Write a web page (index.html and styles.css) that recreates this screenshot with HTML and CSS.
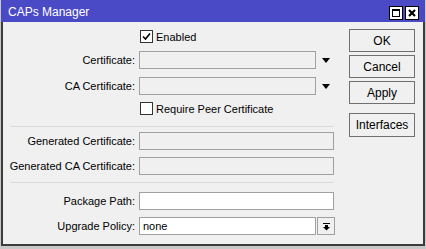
FILE: index.html
```html
<!DOCTYPE html>
<html lang="en">
<head>
    <meta charset="UTF-8">
    <meta name="viewport" content="width=device-width, initial-scale=1.0">
    <title>CAPs Manager</title>
    <link rel="stylesheet" href="styles.css">
</head>
<body>

    <div class="window">
        <!-- Title Bar -->
        <div class="titlebar">
            <span class="title">CAPs Manager</span>
            <div class="title-buttons">
                <span class="tbtn">
                    <svg width="10" height="10" viewBox="0 0 10 10"><rect x="1.5" y="1.5" width="7" height="7" fill="none" stroke="#000" stroke-width="1"/><rect x="1" y="1" width="8" height="2" fill="#000"/></svg>
                </span>
                <span class="tbtn">
                    <svg width="10" height="10" viewBox="0 0 10 10"><path d="M2 2 L8 8 M8 2 L2 8" stroke="#000" stroke-width="2.2"/></svg>
                </span>
            </div>
        </div>

        <div class="content">
            <!-- Form -->
            <div class="form">
                <div class="row check-row first">
                    <span class="label"></span>
                    <span class="checkbox">
                        <svg width="11" height="11" viewBox="0 0 11 11"><path d="M2 5.5 L4.5 8 L9 2.5" fill="none" stroke="#000" stroke-width="1.6"/></svg>
                    </span>
                    <span class="check-text">Enabled</span>
                </div>
                <div class="row field-row gap8">
                    <span class="label">Certificate:</span>
                    <span class="field disabled short"></span>
                    <span class="arrow"></span>
                </div>
                <div class="row field-row gap8">
                    <span class="label">CA Certificate:</span>
                    <span class="field disabled short"></span>
                    <span class="arrow"></span>
                </div>
                <div class="row check-row gap7">
                    <span class="label"></span>
                    <span class="checkbox"></span>
                    <span class="check-text">Require Peer Certificate</span>
                </div>

                <div class="separator sep1"></div>

                <div class="row field-row gap5">
                    <span class="label">Generated Certificate:</span>
                    <span class="field disabled wide"></span>
                </div>
                <div class="row field-row">
                    <span class="label">Generated CA Certificate:</span>
                    <span class="field disabled wide"></span>
                </div>

                <div class="separator sep2"></div>

                <div class="row field-row gap9">
                    <span class="label">Package Path:</span>
                    <span class="field wide"></span>
                </div>
                <div class="row field-row">
                    <span class="label">Upgrade Policy:</span>
                    <span class="field short value">none</span>
                    <span class="drop-btn">
                        <svg width="9" height="9" viewBox="0 0 9 9"><rect x="1" y="1" width="7" height="1" fill="#000"/><rect x="3" y="3" width="3" height="2" fill="#000"/><path d="M1 5 L8 5 L4.5 8.5 Z" fill="#000"/></svg>
                    </span>
                </div>
            </div>

            <!-- Buttons -->
            <div class="buttons">
                <button class="btn">OK</button>
                <button class="btn">Cancel</button>
                <button class="btn">Apply</button>
                <button class="btn extra">Interfaces</button>
            </div>
        </div>
    </div>

</body>
</html>
```

FILE: styles.css
```css
body {
    margin: 0;
    background-color: #c8c8c8;
    font-family: 'Liberation Sans', Arial, sans-serif;
    font-size: 11px;
    color: #000;
}

/* Window frame */
.window {
    width: 420px;
    height: 244px;
    margin-left: 1px;
    background-color: #f0f0f0;
    border: 2px solid #3c3c3c;
    border-top: none;
    display: flex;
    flex-direction: column;
}

.titlebar {
    height: 22px;
    margin: 0 -2px;
    background-color: #4a4ac6;
    display: flex;
    align-items: center;
    justify-content: space-between;
    padding: 0 6px 0 7px;
}

.title {
    color: white;
    font-size: 12px;
    padding-top: 1px;
}

.title-buttons {
    display: flex;
    gap: 2px;
    margin-top: 3px;
}

.tbtn {
    width: 12px;
    height: 12px;
    background: white;
    border: 1px solid #000;
    display: flex;
    align-items: center;
    justify-content: center;
}

.content {
    display: flex;
    flex: 1;
}

/* Form column */
.form {
    width: 338px;
}

.row {
    display: flex;
    align-items: center;
}

.row.first {
    margin-top: 8px;
}

.check-row {
    height: 13px;
}

.field-row {
    height: 18px;
    margin-top: 7px;
}

.row.gap5 { margin-top: 5px; }
.row.gap7 { margin-top: 7px; }
.row.gap8 { margin-top: 8px; }
.row.gap9 { margin-top: 9px; }

.label {
    width: 132px;
    margin-right: 4px;
    text-align: right;
    white-space: nowrap;
}

.checkbox {
    width: 11px;
    height: 11px;
    background: white;
    border: 1px solid #333;
    display: flex;
    align-items: center;
    justify-content: center;
    margin-left: 1px;
}

.check-text {
    margin-left: 3px;
    font-size: 11px;
}

.field {
    height: 16px;
    border: 1px solid #a0a0a0;
    background: white;
    line-height: 16px;
    padding-left: 3px;
    box-sizing: content-box;
}

.field.disabled {
    background: #f0f0f0;
}

.field.short {
    width: 172px;
}

.field.wide {
    width: 190px;
}

.arrow {
    width: 0;
    height: 0;
    margin-left: 6px;
    border-left: 4px solid transparent;
    border-right: 4px solid transparent;
    border-top: 5px solid #000;
}

.drop-btn {
    width: 16px;
    height: 16px;
    margin-left: 1px;
    border: 1px solid #a0a0a0;
    display: flex;
    align-items: center;
    justify-content: center;
}

.separator {
    height: 1px;
    background-color: #d8d8d8;
    margin-left: 8px;
    width: 322px;
}

.sep1 {
    margin-top: 11px;
}

.sep2 {
    margin-top: 7px;
}

/* Buttons column */
.buttons {
    display: flex;
    flex-direction: column;
    gap: 3px;
    padding-top: 7px;
    margin-left: 8px;
}

.btn {
    width: 66px;
    height: 23px;
    font-family: 'Liberation Sans', Arial, sans-serif;
    font-size: 12px;
    background-color: #f0f0f0;
    border: 1px solid #707070;
    padding: 0;
    color: #000;
}

.btn.extra {
    margin-top: 6px;
    height: 24px;
}
```
